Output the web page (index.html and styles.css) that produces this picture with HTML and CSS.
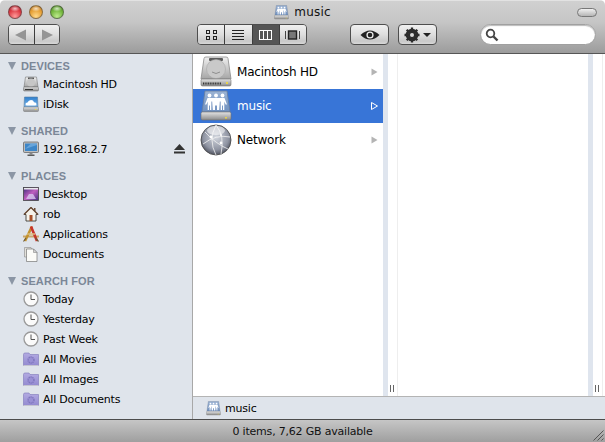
FILE: index.html
```html
<!DOCTYPE html>
<html lang="en">
<head>
<meta charset="utf-8">
<title>music</title>
<link rel="stylesheet" href="styles.css">
</head>
<body>
<svg class="defs" aria-hidden="true">
  <defs>
    <linearGradient id="silver" x1="0" y1="0" x2="0" y2="1"><stop offset="0" stop-color="#f0f0f0"/><stop offset="1" stop-color="#a5a5a5"/></linearGradient>
    <linearGradient id="blueface" x1="0" y1="0" x2="0" y2="1"><stop offset="0" stop-color="#9db4d4"/><stop offset="1" stop-color="#6f90bf"/></linearGradient>
    <linearGradient id="strip" x1="0" y1="0" x2="0" y2="1"><stop offset="0" stop-color="#e4e4e4"/><stop offset="1" stop-color="#8b8b8b"/></linearGradient>
    <radialGradient id="globe" cx=".5" cy=".4" r=".65"><stop offset="0" stop-color="#d2d6de"/><stop offset=".65" stop-color="#8f94a2"/><stop offset="1" stop-color="#3c3f4b"/></radialGradient>
    <linearGradient id="idisk" x1="0" y1="0" x2="0" y2="1"><stop offset="0" stop-color="#2e7fce"/><stop offset="1" stop-color="#7fb8ea"/></linearGradient>
    <linearGradient id="desk" x1="0" y1="0" x2="1" y2="1"><stop offset="0" stop-color="#3a2a78"/><stop offset=".5" stop-color="#c05fc0"/><stop offset="1" stop-color="#40307f"/></linearGradient>
    <linearGradient id="purple" x1="0" y1="0" x2="0" y2="1"><stop offset="0" stop-color="#b3abe2"/><stop offset="1" stop-color="#938ad0"/></linearGradient>

    <symbol id="i-hd" viewBox="0 0 32 32">
      <path d="M4 2.5Q4 1 6 1H26Q28 1 28 2.5L31 23H1Z" fill="url(#silver)" stroke="#8a8a8a" stroke-width=".8"/>
      <rect x="9" y="2" width="14" height="3" rx="1" fill="#5c5c5c"/>
      <circle cx="16" cy="13" r="9.5" fill="#c9c9c9" stroke="#a8a8a8" stroke-width=".6"/>
      <path d="M12 16Q16 19 20 16" fill="none" stroke="#8f8f8f" stroke-width="1"/>
      <rect x="1" y="23" width="30" height="7" rx="1.5" fill="url(#strip)" stroke="#777" stroke-width=".6"/>
      <path d="M3 27.5H21" stroke="#333" stroke-width="2" stroke-dasharray="1 .7"/>
      <rect x="26" y="26" width="2" height="2" fill="#e8d34a"/>
    </symbol>

    <symbol id="i-share" viewBox="0 0 32 32">
      <path d="M5 1H27L30 22H2Z" fill="url(#blueface)" stroke="#6b7f9c" stroke-width=".8"/>
      <g fill="#fff">
        <circle cx="9.500" cy="5.500" r="1.900"/><circle cx="16" cy="5.500" r="1.900"/><circle cx="22.500" cy="5.500" r="1.900"/>
        <path d="M7.500 8H24.500L27 14.500H25.600L24.300 11.500V20H23V15.500H22V20H20.700V11.500H19.800L19.200 20H17V15.500H15V20H12.800L12.200 11.500H11.300V20H10V15.500H9V20H7.700V11.500L6.400 14.500H5Z"/>
      </g>
      <rect x="1" y="22" width="30" height="8" rx="1.500" fill="url(#strip)" stroke="#6e6e6e" stroke-width=".6"/>
      <rect x="25" y="27" width="2" height="1.500" fill="#e8d34a"/>
    </symbol>

    <symbol id="i-net" viewBox="0 0 32 32">
      <circle cx="16" cy="16" r="15" fill="url(#globe)" stroke="#444" stroke-width=".8"/>
      <g fill="none" stroke="#f2f2f2" stroke-width=".8">
        <path d="M3 20Q16 10 30 13"/><path d="M5 8Q16 20 28 25"/><path d="M16 1Q8 16 16 31"/><path d="M16 1Q25 12 21 30"/>
      </g>
      <g fill="#fff"><circle cx="11" cy="13" r="1.400"/><circle cx="21" cy="19" r="1.400"/><circle cx="21" cy="11" r="1"/></g>
      <ellipse cx="16" cy="6.500" rx="9" ry="4.500" fill="#fff" opacity=".55"/>
    </symbol>

    <symbol id="i-sm-hd" viewBox="0 0 16 16">
      <path d="M2.500 1H13.500L15 11H1Z" fill="url(#silver)" stroke="#777" stroke-width=".6"/>
      <rect x="5" y="1.500" width="6" height="1.500" fill="#555"/>
      <circle cx="8" cy="6.500" r="4" fill="#c6c6c6"/>
      <rect x=".5" y="11" width="15" height="4" rx="1" fill="url(#strip)" stroke="#666" stroke-width=".5"/>
      <path d="M2 13.500H10" stroke="#333" stroke-width="1"/>
    </symbol>

    <symbol id="i-idisk" viewBox="0 0 16 16">
      <path d="M1.500 1H14.500L15 11H1Z" fill="url(#idisk)" stroke="#5b7d9f" stroke-width=".6"/>
      <path d="M4 9.500Q2.500 9.500 2.500 8Q2.500 6.500 4.500 6.500Q5.500 4 8 4Q10.500 4 11 6.200Q13.500 6.200 13.500 8Q13.500 9.500 12 9.500Z" fill="#fff"/>
      <rect x=".5" y="11" width="15" height="4.500" rx="1" fill="url(#strip)" stroke="#777" stroke-width=".5"/>
      <rect x="12" y="13" width="1.500" height="1" fill="#e8d34a"/>
    </symbol>

    <symbol id="i-mon" viewBox="0 0 16 16">
      <rect x=".5" y="1" width="15" height="10.500" rx="1" fill="#bdbdbd" stroke="#5c5c5c" stroke-width=".7"/>
      <rect x="2" y="2.500" width="12" height="7.500" fill="#3d86c8"/>
      <path d="M2 8L14 4V2.500H8Z" fill="#79b2e2" opacity=".7"/>
      <rect x="6.500" y="11.500" width="3" height="2" fill="#888"/>
      <rect x="4.500" y="13.500" width="7" height="1.500" fill="#5a5a5a"/>
    </symbol>

    <symbol id="i-desk" viewBox="0 0 16 16">
      <rect x=".5" y="1.500" width="15" height="13" fill="url(#desk)" stroke="#444" stroke-width=".8"/>
      <rect x="1" y="2" width="14" height="1.500" fill="#e9e9ee"/>
      <path d="M3 13L6 8H10L13 13Z" fill="#d8c8f0" opacity=".8"/>
    </symbol>

    <symbol id="i-home" viewBox="0 0 16 16">
      <path d="M8 1.500L1 8.500H3V15H13V8.500H15Z" fill="#f5f2ea" stroke="#3f3a34" stroke-width=".9"/>
      <path d="M8 1.500L1 8.500M8 1.500L15 8.500" stroke="#6b4a34" stroke-width="1.300" fill="none"/>
      <rect x="6.500" y="9" width="3" height="6" fill="#a8512a"/>
      <rect x="11" y="2" width="1.500" height="3" fill="#6b4a34"/>
    </symbol>

    <symbol id="i-apps" viewBox="0 0 16 16">
      <path d="M0 10.500H16" stroke="#c9a66b" stroke-width="2.200"/>
      <path d="M9 .5L2 15" stroke="#c2922f" stroke-width="2.600"/>
      <path d="M8 .5L14 15" stroke="#c9332b" stroke-width="2.600"/>
      <path d="M4 8H12" stroke="#d9bb7c" stroke-width="1.500"/>
      <path d="M.5 15.500L3 12M15.500 15.500L12.500 12" stroke="#6d5a3a" stroke-width="1.200"/>
    </symbol>

    <symbol id="i-doc" viewBox="0 0 16 16">
      <path d="M1.500 1.500H8L9 3V11H1.500Z" fill="#e2e0d9" stroke="#8a8a8a" stroke-width=".6"/>
      <path d="M3.500 3H10.500L14 6.500V15.500H3.500Z" fill="#fbfbf8" stroke="#777" stroke-width=".7"/>
      <path d="M10.500 3V6.500H14Z" fill="#d5d5d5" stroke="#777" stroke-width=".5"/>
    </symbol>

    <symbol id="i-clock" viewBox="0 0 16 16">
      <circle cx="8" cy="8" r="7" fill="#fafafa" stroke="#9a9a9a" stroke-width="1.300"/>
      <path d="M8 3.500V8.500H12" fill="none" stroke="#555" stroke-width="1"/>
    </symbol>

    <symbol id="i-smart" viewBox="0 0 16 16">
      <path d="M.5 3.500Q.5 2 2 2H6L7 3.500H15.500V14.500H.5Z" fill="url(#purple)" stroke="#7e77b8" stroke-width=".6"/>
      <rect x=".5" y="14" width="15" height="1" fill="#c4c4cf"/>
      <circle cx="8" cy="9" r="3" fill="#9a91d4" stroke="#7d74bc" stroke-width="1.400" stroke-dasharray="1.200 .7"/>
    </symbol>
  </defs>
</svg>

<div class="window">
  <header class="toolbar">
    <div class="titlebar">
      <div class="lights">
        <span class="light red"></span>
        <span class="light orange"></span>
        <span class="light green"></span>
      </div>
      <div class="title">
        <svg class="tiny"><use href="#i-share"/></svg>
        <span>music</span>
      </div>
      <div class="pill-wrap"><span class="pill"></span></div>
    </div>
    <div class="tools">
      <div class="btn-group nav">
        <button class="seg"><svg width="14" height="12" viewBox="0 0 14 12"><path d="M1 6L12 .5V11.500Z" fill="#959595"/></svg></button>
        <button class="seg"><svg width="14" height="12" viewBox="0 0 14 12"><path d="M13 6L2 .5V11.500Z" fill="#959595"/></svg></button>
      </div>
      <div class="btn-group views">
        <button class="seg"><svg width="11" height="10" viewBox="0 0 11 10" fill="none" stroke="#222"><rect x=".5" y=".5" width="3" height="3"/><rect x="7.500" y=".5" width="3" height="3"/><rect x=".5" y="6.500" width="3" height="3"/><rect x="7.500" y="6.500" width="3" height="3"/></svg></button>
        <button class="seg"><svg width="12" height="11" viewBox="0 0 12 11" stroke="#222"><path d="M0 1.500H12M0 4.500H12M0 7.500H12M0 10.500H12"/></svg></button>
        <button class="seg on"><svg width="13" height="10" viewBox="0 0 13 10" fill="none" stroke="#fff"><rect x=".5" y=".5" width="12" height="9"/><path d="M4.500 1V9M8.500 1V9"/></svg></button>
        <button class="seg"><svg width="15" height="10" viewBox="0 0 15 10"><rect x="3.500" y="1" width="8" height="8" fill="#777" stroke="#222" stroke-width="1.400"/><path d="M.5 1V9M14.500 1V9" stroke="#444"/></svg></button>
      </div>
      <button class="btn eye"><svg width="20" height="12" viewBox="0 0 20 12"><path d="M.5 6Q10-3 19.500 6Q10 15 .5 6Z" fill="#222"/><circle cx="10" cy="6" r="3.600" fill="#eee"/><circle cx="10" cy="6" r="2.300" fill="#222"/></svg></button>
      <button class="btn gear"><svg width="16" height="16" viewBox="0 0 16 16"><circle cx="8" cy="8" r="4.800" fill="none" stroke="#2b2b2b" stroke-width="3"/><path d="M8 .5V15.500M.5 8H15.500M2.700 2.700L13.300 13.300M13.300 2.700L2.700 13.300" stroke="#2b2b2b" stroke-width="2.300"/><circle cx="8" cy="8" r="2" fill="#d8d8d8"/></svg><svg width="8" height="4" viewBox="0 0 8 4"><path d="M0 0H8L4 4Z" fill="#222"/></svg></button>
      <div class="search"><svg width="14" height="14" viewBox="0 0 14 14" fill="none" stroke="#444"><circle cx="5.500" cy="5.500" r="3.800" stroke-width="1.800"/><path d="M8.500 8.500L12.500 12.500" stroke-width="2.400"/></svg></div>
    </div>
  </header>

  <div class="main">
    <aside class="sidebar">
      <section class="group">
        <h2 class="group-head"><span class="tri"></span>DEVICES</h2>
        <div class="item"><svg class="ico"><use href="#i-sm-hd"/></svg>Macintosh HD</div>
        <div class="item"><svg class="ico"><use href="#i-idisk"/></svg>iDisk</div>
      </section>
      <section class="group">
        <h2 class="group-head"><span class="tri"></span>SHARED</h2>
        <div class="item"><svg class="ico"><use href="#i-mon"/></svg>192.168.2.7<svg class="eject" width="11" height="10" viewBox="0 0 11 10"><path d="M5.500 0L11 6H0Z" fill="#333"/><rect y="7.500" width="11" height="2" fill="#333"/></svg></div>
      </section>
      <section class="group">
        <h2 class="group-head"><span class="tri"></span>PLACES</h2>
        <div class="item"><svg class="ico"><use href="#i-desk"/></svg>Desktop</div>
        <div class="item"><svg class="ico"><use href="#i-home"/></svg>rob</div>
        <div class="item"><svg class="ico"><use href="#i-apps"/></svg>Applications</div>
        <div class="item"><svg class="ico"><use href="#i-doc"/></svg>Documents</div>
      </section>
      <section class="group">
        <h2 class="group-head"><span class="tri"></span>SEARCH FOR</h2>
        <div class="item"><svg class="ico"><use href="#i-clock"/></svg>Today</div>
        <div class="item"><svg class="ico"><use href="#i-clock"/></svg>Yesterday</div>
        <div class="item"><svg class="ico"><use href="#i-clock"/></svg>Past Week</div>
        <div class="item"><svg class="ico"><use href="#i-smart"/></svg>All Movies</div>
        <div class="item"><svg class="ico"><use href="#i-smart"/></svg>All Images</div>
        <div class="item"><svg class="ico"><use href="#i-smart"/></svg>All Documents</div>
      </section>
    </aside>

    <div class="browser">
      <div class="columns">
        <div class="col col-first">
          <div class="list">
            <div class="row"><svg class="big"><use href="#i-hd"/></svg><span class="row-name">Macintosh HD</span><svg class="arrow" width="7" height="8" viewBox="0 0 7 8"><path d="M.5 .5L6.500 4L.5 7.500Z"/></svg></div>
            <div class="row sel"><svg class="big"><use href="#i-share"/></svg><span class="row-name">music</span><svg class="arrow" width="7" height="8" viewBox="0 0 7 8"><path d="M.5 .5L6.500 4L.5 7.500Z"/></svg></div>
            <div class="row"><svg class="big"><use href="#i-net"/></svg><span class="row-name">Network</span><svg class="arrow" width="7" height="8" viewBox="0 0 7 8"><path d="M.5 .5L6.500 4L.5 7.500Z"/></svg></div>
          </div>
          <div class="gutter"></div>
          <div class="handle"><i></i><i></i></div>
        </div>
        <div class="col col-second">
          <div class="list"></div>
          <div class="gutter"></div>
          <div class="handle"><i></i><i></i></div>
        </div>
      </div>
      <div class="pathbar">
        <svg class="tiny"><use href="#i-share"/></svg>
        <span>music</span>
      </div>
    </div>
  </div>

  <footer class="status">
    <span class="status-text">0 items, 7,62 GB available</span>
    <svg class="grip" width="11" height="11" viewBox="0 0 11 11" stroke="#555" fill="none"><path d="M.5 10.500L10.500 .5M4.500 10.500L10.500 4.500M8.500 10.500L10.500 8.500"/></svg>
  </footer>
</div>
</body>
</html>
```

FILE: styles.css
```css
* { box-sizing: border-box; }

html, body {
  margin: 0;
  height: 100%;
  background: #fff;
}

body {
  font-family: "DejaVu Sans", sans-serif;
  font-size: 11px;
  letter-spacing: -.2px;
  color: #000;
  overflow: hidden;
}

.defs { display: block; width: 0; height: 0; }

.window {
  width: 605px;
  height: 442px;
  display: flex;
  flex-direction: column;
  border-radius: 5px 5px 0 0;
  overflow: hidden;
}

.toolbar {
  height: 54px;
  flex: none;
  border-bottom: 1px solid #565656;
  border-top: 1px solid #e2e2e2;
  background: linear-gradient(#d0d0d0, #c6c6c6 40%, #9c9c9c);
}

.titlebar {
  height: 22px;
  display: grid;
  grid-template-columns: 1fr auto 1fr;
  align-items: center;
  padding: 0 8px;
}

.lights { display: flex; gap: 7px; }

.light {
  width: 14px;
  height: 14px;
  border-radius: 50%;
  border: 1px solid rgba(70, 70, 70, .55);
}

.red {
  background:
    radial-gradient(ellipse 5px 3px at 50% 22%, rgba(255, 255, 255, .7), transparent),
    radial-gradient(circle at 50% 85%, #ff9a9a, #dd3b44 55%, #a52029);
}

.orange {
  background:
    radial-gradient(ellipse 5px 3px at 50% 22%, rgba(255, 255, 255, .7), transparent),
    radial-gradient(circle at 50% 85%, #ffd98a, #e6a036 55%, #b06f1c);
}

.green {
  background:
    radial-gradient(ellipse 5px 3px at 50% 22%, rgba(255, 255, 255, .7), transparent),
    radial-gradient(circle at 50% 85%, #bdeb8c, #73b63d 55%, #477f1f);
}

.title {
  display: flex;
  align-items: center;
  gap: 5px;
  font-size: 12px;
  color: #111;
  letter-spacing: .2px;
}

.tiny { width: 15px; height: 15px; }

.pill-wrap { display: flex; justify-content: flex-end; }

.pill {
  width: 20px;
  height: 9px;
  border-radius: 5px;
  border: 1px solid #777;
  background: linear-gradient(#f0f0f0, #b5b5b5);
}

.tools {
  display: flex;
  height: 21px;
  margin-top: 1px;
  padding-left: 8px;
}

button {
  padding: 0;
  margin: 0;
  font: inherit;
  display: flex;
  align-items: center;
  justify-content: center;
}

.btn-group {
  display: flex;
  height: 21px;
  border: 1px solid #4e4e4e;
  border-radius: 4px;
  overflow: hidden;
}

.seg {
  flex: 1;
  border: 0;
  border-left: 1px solid #3e3e3e;
  background: linear-gradient(#f0f0f0, #dedede 50%, #c9c9c9 85%, #d8d8d8);
}

.seg:first-child { border-left: 0; }

.seg.on { background: #555; }

.nav { width: 52px; }

.views { width: 110px; margin-left: 137px; }

.btn {
  width: 39px;
  height: 21px;
  border: 1px solid #4e4e4e;
  border-radius: 4px;
  gap: 3px;
  background: linear-gradient(#f0f0f0, #dedede 50%, #c9c9c9 85%, #d8d8d8);
}

.eye { margin-left: 43px; }
.gear { margin-left: 9px; }

.search {
  width: 116px;
  height: 21px;
  margin-left: 43px;
  padding-left: 4px;
  display: flex;
  align-items: center;
  background: #fff;
  border-radius: 11px;
  border: 1px solid #a0a0a0;
  box-shadow: inset 0 1px 1px #bbb;
}

.main {
  flex: 1;
  min-height: 0;
  display: flex;
  border-bottom: 1px solid #4c4c4c;
}

.sidebar {
  width: 193px;
  flex: none;
  padding-top: 4px;
  background: #dfe4eb;
  border-right: 1px solid #a8a8a8;
}

.group { margin-bottom: 9px; }

.group-head {
  margin: 0;
  height: 16px;
  display: flex;
  align-items: center;
  padding-left: 8px;
  font-family: "Liberation Sans", sans-serif;
  font-size: 11px;
  font-weight: bold;
  color: #7b8797;
  letter-spacing: .1px;
}

.tri {
  width: 0;
  height: 0;
  margin-right: 5px;
  border-left: 4px solid transparent;
  border-right: 4px solid transparent;
  border-top: 8px solid #8c96a5;
}

.item {
  height: 20px;
  display: flex;
  align-items: center;
  padding-left: 23px;
}

.ico { width: 16px; height: 16px; margin-right: 4px; flex: none; }

.eject { margin-left: auto; margin-right: 7px; }

.browser {
  flex: 1;
  min-width: 0;
  display: flex;
  flex-direction: column;
}

.columns {
  flex: 1;
  min-height: 0;
  display: flex;
  background: #fff;
}

.col { display: flex; }

.col-first { width: 205px; border-right: 1px solid #eee; }

.col-second { flex: 1; padding-right: 2px; }

.col-second .handle { border-right: 1px solid #eee; }

.list { width: 190px; flex: none; padding-top: 1px; }

.gutter { width: 5px; flex: none; background: #dfe5ee; }

.handle {
  flex: 1;
  display: flex;
  align-items: flex-end;
  gap: 2px;
  padding: 0 0 4px 2px;
}

.handle i { width: 1px; height: 7px; background: #666; }

.row {
  height: 34px;
  display: flex;
  align-items: center;
  padding: 0 5px 0 7px;
  font-size: 12px;
}

.big { width: 32px; height: 32px; flex: none; margin-right: 5px; }

.row-name { flex: 1; }

.arrow { fill: #b4b4b4; }

.sel { background: #3875d7; color: #fff; }

.sel .arrow { fill: none; stroke: #fff; }

.pathbar {
  height: 23px;
  flex: none;
  display: flex;
  align-items: center;
  gap: 4px;
  padding-left: 13px;
  background: #dfe4eb;
  border-top: 1px solid #b4b4b4;
}

.status {
  height: 22px;
  flex: none;
  display: grid;
  grid-template-columns: 1fr auto 1fr;
  align-items: center;
  background: linear-gradient(#c6c6c6, #9f9f9f);
  color: #111;
}

.status-text { grid-column: 2; }

.grip { grid-column: 3; justify-self: end; align-self: end; margin: 0 1px 1px 0; }
```
